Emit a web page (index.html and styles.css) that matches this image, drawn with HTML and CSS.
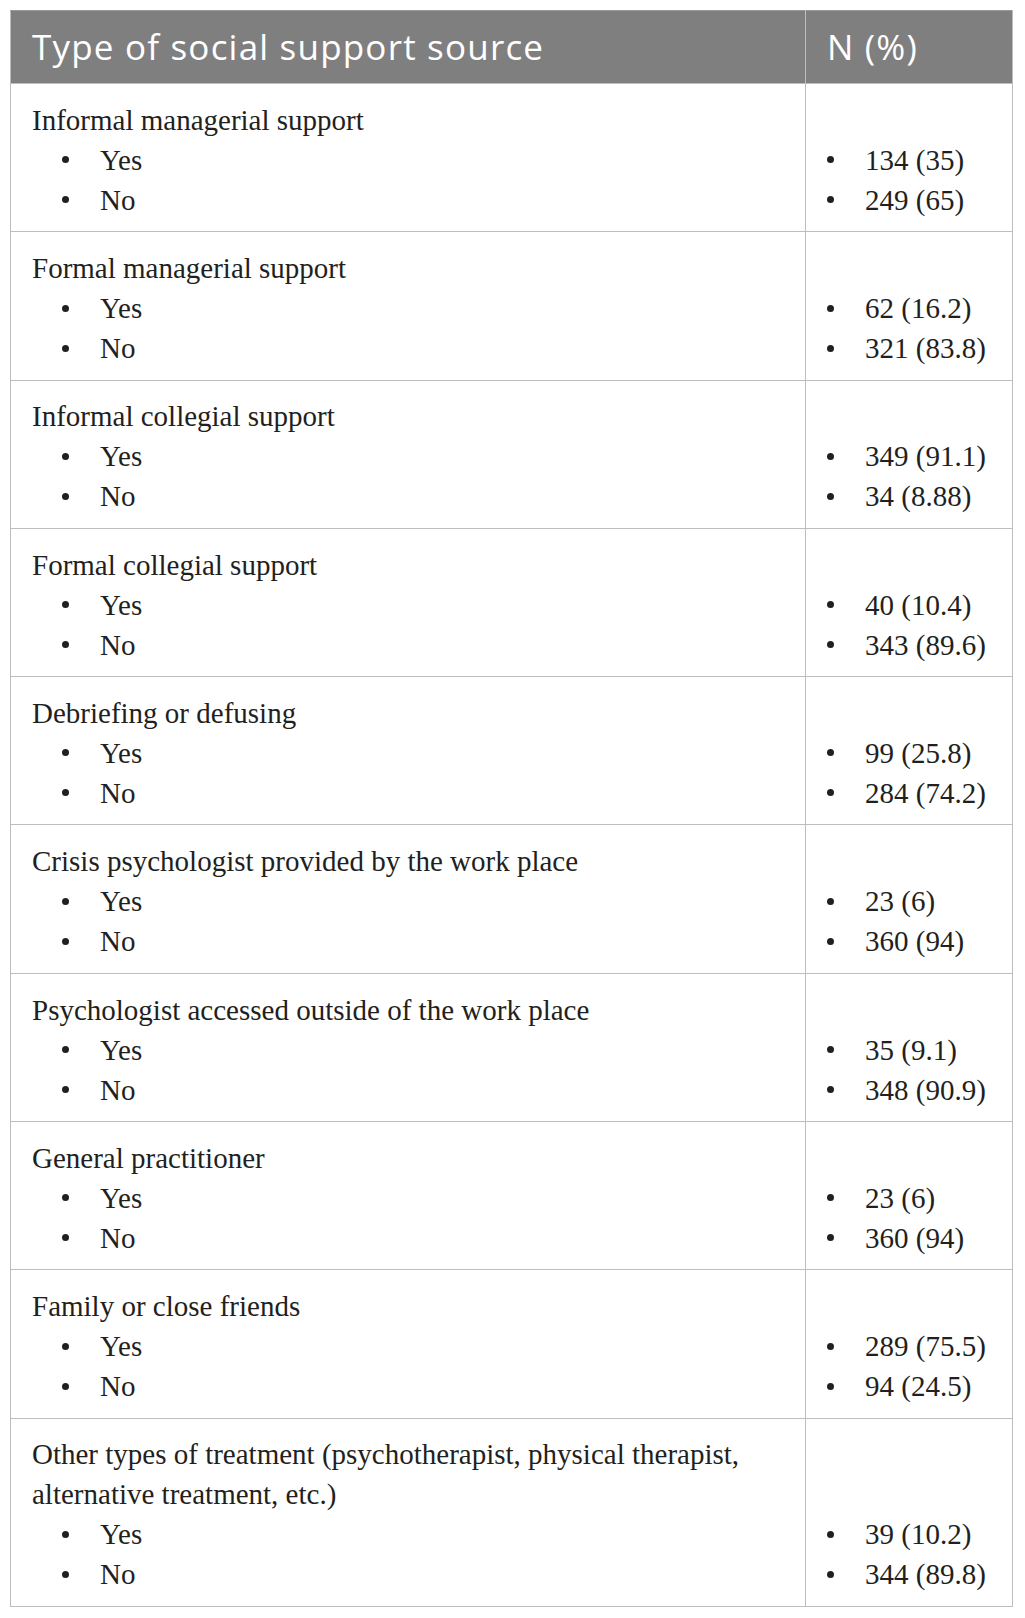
FILE: index.html
```html
<!DOCTYPE html>
<html lang="en">
<head>
<meta charset="utf-8">
<title>Type of social support source</title>
<link rel="stylesheet" href="styles.css">
</head>
<body>
<div class="page">
<table class="support-table">
  <thead>
    <tr>
      <th class="col-type">Type of social support source</th>
      <th class="col-n">N (%)</th>
    </tr>
  </thead>
  <tbody>
    <tr>
      <td class="col-type"><div class="label">Informal managerial support</div><ul class="list list-left"><li>Yes</li><li>No</li></ul></td>
      <td class="col-n"><ul class="list list-right"><li>134 (35)</li><li>249 (65)</li></ul></td>
    </tr>
    <tr>
      <td class="col-type"><div class="label">Formal managerial support</div><ul class="list list-left"><li>Yes</li><li>No</li></ul></td>
      <td class="col-n"><ul class="list list-right"><li>62 (16.2)</li><li>321 (83.8)</li></ul></td>
    </tr>
    <tr>
      <td class="col-type"><div class="label">Informal collegial support</div><ul class="list list-left"><li>Yes</li><li>No</li></ul></td>
      <td class="col-n"><ul class="list list-right"><li>349 (91.1)</li><li>34 (8.88)</li></ul></td>
    </tr>
    <tr>
      <td class="col-type"><div class="label">Formal collegial support</div><ul class="list list-left"><li>Yes</li><li>No</li></ul></td>
      <td class="col-n"><ul class="list list-right"><li>40 (10.4)</li><li>343 (89.6)</li></ul></td>
    </tr>
    <tr>
      <td class="col-type"><div class="label">Debriefing or defusing</div><ul class="list list-left"><li>Yes</li><li>No</li></ul></td>
      <td class="col-n"><ul class="list list-right"><li>99 (25.8)</li><li>284 (74.2)</li></ul></td>
    </tr>
    <tr>
      <td class="col-type"><div class="label">Crisis psychologist provided by the work place</div><ul class="list list-left"><li>Yes</li><li>No</li></ul></td>
      <td class="col-n"><ul class="list list-right"><li>23 (6)</li><li>360 (94)</li></ul></td>
    </tr>
    <tr>
      <td class="col-type"><div class="label">Psychologist accessed outside of the work place</div><ul class="list list-left"><li>Yes</li><li>No</li></ul></td>
      <td class="col-n"><ul class="list list-right"><li>35 (9.1)</li><li>348 (90.9)</li></ul></td>
    </tr>
    <tr>
      <td class="col-type"><div class="label">General practitioner</div><ul class="list list-left"><li>Yes</li><li>No</li></ul></td>
      <td class="col-n"><ul class="list list-right"><li>23 (6)</li><li>360 (94)</li></ul></td>
    </tr>
    <tr>
      <td class="col-type"><div class="label">Family or close friends</div><ul class="list list-left"><li>Yes</li><li>No</li></ul></td>
      <td class="col-n"><ul class="list list-right"><li>289 (75.5)</li><li>94 (24.5)</li></ul></td>
    </tr>
    <tr>
      <td class="col-type"><div class="label">Other types of treatment (psychotherapist, physical therapist, alternative treatment, etc.)</div><ul class="list list-left"><li>Yes</li><li>No</li></ul></td>
      <td class="col-n"><ul class="list list-right"><li>39 (10.2)</li><li>344 (89.8)</li></ul></td>
    </tr>
  </tbody>
</table>
</div>
</body>
</html>
```

FILE: styles.css
```css
html, body {
  margin: 0;
  padding: 0;
  background: #ffffff;
}

.page {
  padding: 10px 12px 10px 10px;
}

.support-table {
  width: 1003px;
  border-collapse: collapse;
  table-layout: fixed;
  border: 1px solid #bdbdbd;
}

.support-table th {
  background: #7f7f7f;
  color: #ffffff;
  font-family: "Open Sans", "Noto Sans", sans-serif;
  font-weight: 400;
  font-size: 35px;
  letter-spacing: 1.2px;
  line-height: 40px;
  text-align: left;
  height: 72px;
  padding: 0 0 0 21px;
  vertical-align: middle;
  border: 1px solid #bdbdbd;
  border-top-color: #9a9a9a;
}

.support-table th.col-type {
  width: 773px;
}

.support-table td {
  font-family: "Liberation Serif", "Times New Roman", serif;
  font-size: 29px;
  line-height: 40px;
  color: #231f20;
  padding: 15.8px 10px 11.5px 21px;
  border: 1px solid #bdbdbd;
  vertical-align: bottom;
}

.label {
  display: block;
}

.list {
  list-style: none;
  margin: 0;
}

.list li {
  display: flex;
  align-items: center;
}

.list li::before {
  content: "";
  flex: none;
  width: 7px;
  height: 7px;
  border-radius: 50%;
  background: #231f20;
  margin-right: 31px;
}

.list-left {
  padding-left: 30px;
}

.list-right {
  padding-left: 0;
}
```
